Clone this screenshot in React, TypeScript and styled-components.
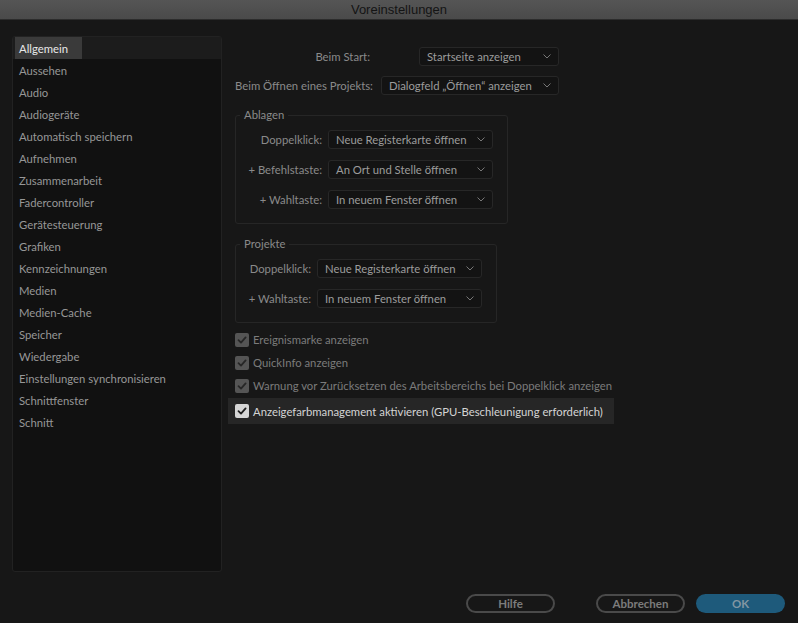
import styled, { createGlobalStyle } from 'styled-components';

const GlobalStyle = createGlobalStyle`
    html, body {
        margin: 0;
        padding: 0;
        background: #171717;
    }
    * {
        box-sizing: border-box;
    }
`;

const Window = styled.div`
    width: 798px;
    height: 623px;
    display: flex;
    flex-direction: column;
    background: #171717;
    font-family: Lato, 'Noto Sans', sans-serif;
    font-size: 11.3px;
    color: #8e8e8e;
    overflow: hidden;
`;

const TitleBar = styled.div`
    height: 20px;
    flex: none;
    display: flex;
    align-items: center;
    justify-content: center;
    background: linear-gradient(#555555, #4a4a4a);
    border-bottom: 1px solid #2c2c2c;
    font-family: 'Liberation Sans', Arial, sans-serif;
    font-size: 13px;
    color: #141414;
`;

const Body = styled.div`
    flex: 1;
    display: flex;
    padding: 16px 0 0 12px;
    gap: 13px;
`;

const Sidebar = styled.div`
    width: 210px;
    height: 536px;
    background: #111111;
    border: 1px solid #222222;
    border-radius: 3px;
    display: flex;
    flex-direction: column;
`;

const NavRow = styled.div<{ $active?: boolean }>`
    height: 22px;
    display: flex;
    align-items: center;
    padding-left: 2px;
    background: ${(p) => (p.$active ? '#1c1c1c' : 'transparent')};
`;

const NavLabel = styled.span<{ $active?: boolean }>`
    height: 22px;
    display: flex;
    align-items: center;
    padding: 0 14px 0 4px;
    background: ${(p) => (p.$active ? '#3a3a3a' : 'transparent')};
    color: ${(p) => (p.$active ? '#e8e8e8' : '#979797')};
`;

const Main = styled.div`
    display: flex;
    flex-direction: column;
    padding-top: 11px;
`;

const TopGrid = styled.div`
    display: grid;
    grid-template-columns: 135px 178px;
    column-gap: 11px;
    row-gap: 10px;
    align-items: center;
`;

const Label = styled.span`
    text-align: right;
    color: #8a8a8a;
    white-space: nowrap;
`;

const SelectBox = styled.div<{ $width: number }>`
    width: ${(p) => p.$width}px;
    height: 19px;
    justify-self: end;
    display: flex;
    align-items: center;
    justify-content: space-between;
    padding: 0 7px;
    background: #131313;
    border: 1px solid #272727;
    border-radius: 3px;
    color: #9c9c9c;
    white-space: nowrap;

    & > svg {
        width: 8px;
        height: 5px;
        flex: none;
    }
`;

const Group = styled.fieldset<{ $label: number }>`
    margin: 13px 0 0 0;
    padding: 8px 14px 14px 0;
    border: 1px solid #262626;
    border-radius: 3px;
    display: grid;
    grid-template-columns: ${(p) => p.$label}px 165px;
    column-gap: 6px;
    row-gap: 11px;
    align-items: center;
    width: fit-content;
    min-width: 0;
`;

const Legend = styled.legend`
    margin-left: 4px;
    padding: 0 4px;
    line-height: 14px;
    color: #8a8a8a;
`;

const Checks = styled.div`
    display: flex;
    flex-direction: column;
    margin-top: 5px;
`;

const CheckRow = styled.div<{ $focus?: boolean }>`
    height: ${(p) => (p.$focus ? '26px' : '23px')};
    margin: ${(p) => (p.$focus ? '1px 0 0 -7px' : '0')};
    padding: ${(p) => (p.$focus ? '0 11px 0 7px' : '0')};
    width: fit-content;
    display: flex;
    align-items: center;
    gap: 4px;
    background: ${(p) => (p.$focus ? '#262626' : 'transparent')};
    color: ${(p) => (p.$focus ? '#d4d4d4' : '#7b7b7b')};
    white-space: nowrap;
`;

const Box = styled.span<{ $focus?: boolean }>`
    width: 14px;
    height: 14px;
    flex: none;
    border-radius: 2px;
    display: flex;
    align-items: center;
    justify-content: center;
    background: ${(p) => (p.$focus ? '#d6d6d6' : '#555555')};

    & > svg {
        width: 10px;
        height: 10px;
    }
`;

const Footer = styled.div`
    height: 29px;
    flex: none;
    display: flex;
    justify-content: flex-end;
    align-items: flex-start;
    padding: 0 13px 0 0;
`;

const Button = styled.div<{ $primary?: boolean; $gap?: number }>`
    width: 89px;
    height: 19px;
    margin-left: ${(p) => p.$gap ?? 0}px;
    border-radius: 10px;
    display: flex;
    align-items: center;
    justify-content: center;
    font-weight: 700;
    font-size: 11.5px;
    color: ${(p) => (p.$primary ? '#8296a2' : '#7c7c7c')};
    background: ${(p) => (p.$primary ? '#1e5a7b' : 'transparent')};
    border: ${(p) => (p.$primary ? 'none' : '2px solid #4a4a4a')};
`;

const Chevron = () => (
    <svg viewBox="0 0 8 5" fill="none" stroke="#777777" strokeWidth="1">
        <path d="M0.5 0.5L4 4L7.5 0.5" />
    </svg>
);

const Tick = ({ color }: { color: string }) => (
    <svg viewBox="0 0 10 10" fill="none" stroke={color} strokeWidth="1.8" strokeLinecap="round" strokeLinejoin="round">
        <path d="M1.5 5.2L4 7.6L8.6 2.4" />
    </svg>
);

const navItems = [
    'Allgemein',
    'Aussehen',
    'Audio',
    'Audiogeräte',
    'Automatisch speichern',
    'Aufnehmen',
    'Zusammenarbeit',
    'Fadercontroller',
    'Gerätesteuerung',
    'Grafiken',
    'Kennzeichnungen',
    'Medien',
    'Medien-Cache',
    'Speicher',
    'Wiedergabe',
    'Einstellungen synchronisieren',
    'Schnittfenster',
    'Schnitt',
];

const checks = [
    'Ereignismarke anzeigen',
    'QuickInfo anzeigen',
    'Warnung vor Zurücksetzen des Arbeitsbereichs bei Doppelklick anzeigen',
];

export default function App() {
    return (
        <Window>
            <GlobalStyle />
            <TitleBar>Voreinstellungen</TitleBar>
            <Body>
                <Sidebar>
                    {navItems.map((item, i) => (
                        <NavRow key={item} $active={i === 0}>
                            <NavLabel $active={i === 0}>{item}</NavLabel>
                        </NavRow>
                    ))}
                </Sidebar>
                <Main>
                    <TopGrid>
                        <Label>Beim Start:</Label>
                        <SelectBox $width={140}>
                            Startseite anzeigen
                            <Chevron />
                        </SelectBox>
                        <Label>Beim Öffnen eines Projekts:</Label>
                        <SelectBox $width={178}>
                            Dialogfeld „Öffnen“ anzeigen
                            <Chevron />
                        </SelectBox>
                    </TopGrid>

                    <Group $label={86}>
                        <Legend>Ablagen</Legend>
                        <Label>Doppelklick:</Label>
                        <SelectBox $width={165}>
                            Neue Registerkarte öffnen
                            <Chevron />
                        </SelectBox>
                        <Label>+ Befehlstaste:</Label>
                        <SelectBox $width={165}>
                            An Ort und Stelle öffnen
                            <Chevron />
                        </SelectBox>
                        <Label>+ Wahltaste:</Label>
                        <SelectBox $width={165}>
                            In neuem Fenster öffnen
                            <Chevron />
                        </SelectBox>
                    </Group>

                    <Group $label={75}>
                        <Legend>Projekte</Legend>
                        <Label>Doppelklick:</Label>
                        <SelectBox $width={165}>
                            Neue Registerkarte öffnen
                            <Chevron />
                        </SelectBox>
                        <Label>+ Wahltaste:</Label>
                        <SelectBox $width={165}>
                            In neuem Fenster öffnen
                            <Chevron />
                        </SelectBox>
                    </Group>

                    <Checks>
                        {checks.map((c) => (
                            <CheckRow key={c}>
                                <Box>
                                    <Tick color="#262626" />
                                </Box>
                                {c}
                            </CheckRow>
                        ))}
                        <CheckRow $focus>
                            <Box $focus>
                                <Tick color="#1e1e1e" />
                            </Box>
                            Anzeigefarbmanagement aktivieren (GPU-Beschleunigung erforderlich)
                        </CheckRow>
                    </Checks>
                </Main>
            </Body>
            <Footer>
                <Button>Hilfe</Button>
                <Button $gap={41}>Abbrechen</Button>
                <Button $primary $gap={11}>
                    OK
                </Button>
            </Footer>
        </Window>
    );
}
